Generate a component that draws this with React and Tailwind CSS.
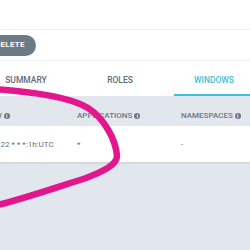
import React from 'react'

function InfoDot() {
  return (
    <span className="ml-[2px] inline-flex h-[6px] w-[6px] items-center justify-center rounded-full bg-[#6b7680] text-[5px] font-bold leading-none text-white">
      i
    </span>
  )
}

const tabs = [
  { label: 'SUMMARY', active: false },
  { label: 'ROLES', active: false },
  { label: 'WINDOWS', active: true },
]

export default function App() {
  return (
    <div className="relative h-[250px] w-[250px] overflow-hidden bg-[#e1e7ec] font-['Roboto',sans-serif]">
      <div className="h-[29px] bg-white" />

      <div className="flex h-[31px] items-center border-t border-[#edf0f2] bg-white">
        <button className="-ml-[16px] h-[21px] rounded-full bg-[#6c7a86] px-[11px] text-[8px] font-bold tracking-[0.3px] text-white">
          DELETE
        </button>
      </div>

      <div className="-ml-[14px] flex h-[36px] gap-[14px] border-t border-[#edf0f2] bg-white">
        {tabs.map((tab) => (
          <div
            key={tab.label}
            className={
              tab.active
                ? 'flex w-[80px] shrink-0 items-center justify-center border-b-2 border-[#3ebfdb] pt-[6px] text-[8.5px] font-medium text-[#3ebfdb]'
                : 'flex w-[80px] shrink-0 items-center justify-center border-b-2 border-transparent pt-[6px] text-[8.5px] font-medium text-[#5f6b75]'
            }
          >
            {tab.label}
          </div>
        ))}
      </div>

      <div className="flex h-[30px] items-start pt-[15px] text-[8px] font-medium leading-[10px] text-[#6d7883]">
        <div className="-ml-[31px] flex w-[108px] shrink-0 items-center">
          WINDOW <InfoDot />
        </div>
        <div className="flex w-[104px] shrink-0 items-center">
          APPLICATIONS <InfoDot />
        </div>
        <div className="flex items-center">
          NAMESPACES <InfoDot />
        </div>
      </div>

      <div className="flex h-[36px] items-center bg-white pt-[1px] text-[8px] text-[#676f78] shadow-[0_1px_2px_rgba(0,0,0,0.12)]">
        <div className="-ml-[6px] w-[83px] shrink-0 whitespace-nowrap">0 22 * * *:1h:UTC</div>
        <div className="w-[104px] shrink-0">*</div>
        <div>-</div>
      </div>

      <svg
        className="pointer-events-none absolute left-0 top-0"
        width="250"
        height="250"
        viewBox="0 0 250 250"
        fill="none"
      >
        <path
          d="M -6 89 C 30 92, 68 96, 88 108 C 104 118, 116 140, 117 156 C 117 165, 102 172, 86 178 C 60 186, 30 197, -6 206"
          stroke="#e3168d"
          strokeWidth="6.5"
          strokeLinecap="round"
        />
      </svg>
    </div>
  )
}
